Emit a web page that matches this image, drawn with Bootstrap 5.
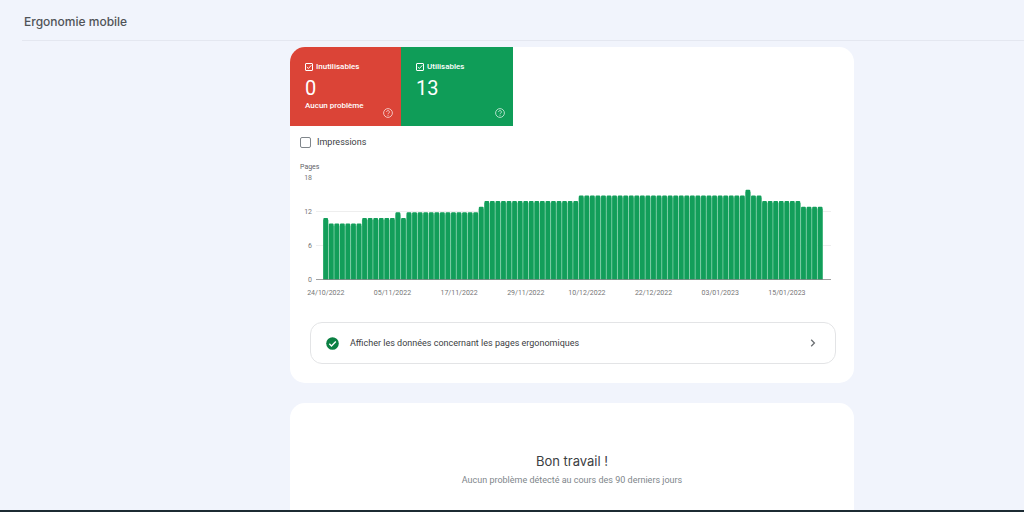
<!DOCTYPE html>
<html lang="fr">
<head>
<meta charset="utf-8">
<meta name="viewport" content="width=device-width, initial-scale=1">
<title>Ergonomie mobile</title>
<link href="https://cdn.jsdelivr.net/npm/bootstrap@5.3.0/dist/css/bootstrap.min.css" rel="stylesheet">
<style>
body{font-family:Roboto,"Liberation Sans",sans-serif;font-size:9px;line-height:12px;color:#3c4043;background:#f1f4fc;border-bottom:2px solid #1c2b33}
.page-head{margin-left:22px;padding:14px 2px 10px;border-bottom:1px solid #e4e7f0}
.page-head h1{font-family:Inter,sans-serif;font-size:12px;line-height:16px;font-weight:500;color:#505357}
.page-main{padding:6px 0 0 120px}
.column{width:100%;max-width:564px;gap:20px}
.panel{background:#fff;border-radius:15px;overflow:hidden}
.tile{width:112px;height:79px;padding:14px 8px 6px 15px;color:#fff;font-size:8px;font-weight:500}
.tile-bad{background:#db4437;width:111px}
.tile-good{background:#0f9d58}
.tile label{gap:3px}
.tile input{appearance:none;width:8px;height:8px;margin:0;border:1px solid #fff;border-radius:1px}
.tile input:checked{background:url("data:image/svg+xml,%3Csvg xmlns='http://www.w3.org/2000/svg' viewBox='0 0 7 7'%3E%3Cpath d='M1 3.5 2.8 5.3 6.2 1.5' fill='none' stroke='white' stroke-width='1.1'/%3E%3C/svg%3E") center/100%}
.figure-num{font-size:20px;line-height:24px;font-weight:400;margin:3px 0 0}
.help{right:8px;bottom:8px;width:10px;height:10px;color:#fff;opacity:.75}
.impr{padding:10px 10px 0;gap:6px}
.impr input{appearance:none;width:11px;height:11px;margin:0;border:1px solid #80868b;border-radius:2px;background:#fff}
.impr input:checked{background:#1a73e8}
.chart{padding:14px 23px 0 10px;font-size:7px;line-height:10px;color:#757575}
.chart-title{color:#5f6368}
.chart-body{margin-top:1px}
.y-axis{width:12px;height:112px;margin-right:4px}
.plot{height:102px;margin-top:5px}
.plot-wrap{min-width:0}
.x-axis{display:grid;grid-template-columns:repeat(90,minmax(0,1fr));margin:8px 8px 0 7px}
.x-axis span{display:flex;justify-content:center;white-space:nowrap}
.see{margin:24px 18px 19px 20px;padding:0 16px 0 15px;height:42px;border:1px solid #e3e4e6;border-radius:12px;color:#3c4043;gap:11px}
.done{padding:48px 20px 40px;color:#80868b}
.done h2{font-family:Inter,sans-serif;font-size:13px;line-height:20px;margin:0 0 3px;color:#3c4043;font-weight:400}
</style>
</head>
<body class="vh-100 overflow-hidden">
<header class="page-head"><h1 class="m-0">Ergonomie mobile</h1></header>
<main class="page-main d-flex justify-content-center">
<div class="column d-flex flex-column">
  <section class="panel">
    <div class="d-flex">
      <div class="tile tile-bad position-relative">
        <label class="d-flex align-items-center" for="bad"><input type="checkbox" id="bad" checked>Inutilisables</label>
        <p class="figure-num">0</p>
        <p class="m-0">Aucun problème</p>
        <button class="help btn p-0 border-0 position-absolute d-flex" aria-label="Aide : Inutilisables"><svg width="10" height="10" viewBox="0 0 10 10" fill="none" stroke="currentColor" stroke-width=".9"><circle cx="5" cy="5" r="4.4"/><path d="M3.6 4a1.4 1.4 0 1 1 2.2 1.1C5.2 5.5 5 5.7 5 6.2M5 6.9v.9"/></svg></button>
      </div>
      <div class="tile tile-good position-relative">
        <label class="d-flex align-items-center" for="good"><input type="checkbox" id="good" checked>Utilisables</label>
        <p class="figure-num">13</p>
        <button class="help btn p-0 border-0 position-absolute d-flex" aria-label="Aide : Utilisables"><svg width="10" height="10" viewBox="0 0 10 10" fill="none" stroke="currentColor" stroke-width=".9"><circle cx="5" cy="5" r="4.4"/><path d="M3.6 4a1.4 1.4 0 1 1 2.2 1.1C5.2 5.5 5 5.7 5 6.2M5 6.9v.9"/></svg></button>
      </div>
    </div>
    <label class="impr d-flex align-items-center" for="impr"><input type="checkbox" id="impr">Impressions</label>
    <div class="chart">
      <div class="chart-title">Pages</div>
      <div class="chart-body d-flex">
        <div class="y-axis flex-shrink-0 d-flex flex-column justify-content-between text-end"><span>18</span><span>12</span><span>6</span><span>0</span></div>
        <div class="plot-wrap flex-grow-1">
          <svg class="plot d-block w-100" id="plot" viewBox="0 0 515 102" preserveAspectRatio="none" role="img" aria-label="Pages utilisables par jour"></svg>
          <div class="x-axis" id="dates"></div>
        </div>
      </div>
    </div>
    <a href="#" class="see d-flex align-items-center text-decoration-none">
      <svg width="13" height="13" viewBox="0 0 13 13"><circle cx="6.5" cy="6.5" r="6.3" fill="#0b8043"/><path d="M3.3 6.7 5.5 8.9 9.8 4.6" fill="none" stroke="#fff" stroke-width="1.4"/></svg>
      <span class="flex-grow-1">Afficher les données concernant les pages ergonomiques</span>
      <svg width="12" height="12" viewBox="0 0 12 12"><path d="M4.2 2.8 7.4 6 4.2 9.2" fill="none" stroke="#6b6f73" stroke-width="1.3"/></svg>
    </a>
  </section>
  <section class="panel done text-center">
    <h2>Bon travail !</h2>
    <p class="m-0">Aucun problème détecté au cours des 90 derniers jours</p>
  </section>
</div>
</main>
<script src="https://cdn.jsdelivr.net/npm/bootstrap@5.3.0/dist/js/bootstrap.bundle.min.js"></script>
<script>
// Runs of [number of days, pages], oldest first
const runs = [[1,11],[6,10],[6,11],[1,12],[1,11],[13,12],[1,13],[17,14],[30,15],[1,16],[2,15],[7,14],[4,13]];
const days = runs.flatMap(([n, v]) => Array(n).fill(v));
const unit = 101.5 / 18, pitch = 500 / days.length;
let out = '';
for (const v of [6, 12]) out += `<path d="M0 ${Math.round(102 - v * unit) - .5}h515" stroke="#eeeeee"/>`;
days.forEach((v, i) => {
  const x = 7 + i * pitch, y = 102 - v * unit;
  out += `<rect x="${x}" y="${y + 2}" width="${pitch}" height="${v * unit - 2}" fill="#7fd0a8"/>`;
  out += `<rect x="${x + .3}" y="${y}" width="${pitch - .8}" height="${v * unit + 2}" rx="1" fill="#129e5a"/>`;
});
out += '<path d="M0 101.5h515" stroke="#8a8a8a" stroke-opacity=".8"/>';
document.getElementById('plot').innerHTML = out;
const dates = [[1,'24/10/2022'],[13,'05/11/2022'],[25,'17/11/2022'],[37,'29/11/2022'],[48,'10/12/2022'],[60,'22/12/2022'],[72,'03/01/2023'],[84,'15/01/2023']];
document.getElementById('dates').innerHTML = dates.map(([c, t]) => `<span style="grid-area:1/${c}">${t}</span>`).join('');
</script>
</body>
</html>
